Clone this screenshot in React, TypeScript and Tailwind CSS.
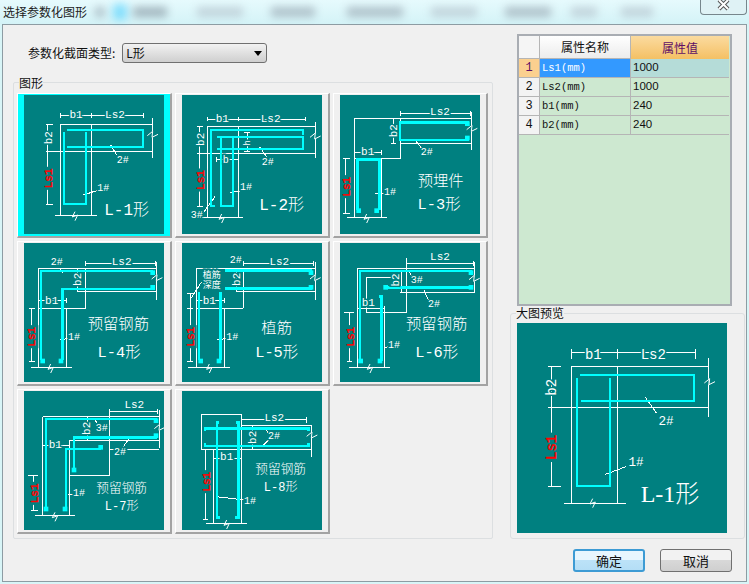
import type { ReactNode } from "react";

const cjk = "font-['Noto_Sans_CJK_SC','Liberation_Sans',sans-serif]";
const TEAL = "#008080";
const CYAN = "#00ffff";

// all drawing coordinates are in 3x reference pixels, one viewBox per drawing
function W({ d }: { d: string }) {
  return <path d={d} fill="none" stroke="#fff" strokeWidth={3} shapeRendering="crispEdges" />;
}

function C({ d, w = 8 }: { d: string; w?: number }) {
  return <path d={d} fill="none" stroke={CYAN} strokeWidth={w} shapeRendering="crispEdges" />;
}

function Blob({ x, y }: { x: number; y: number }) {
  return <rect x={x - 7} y={y - 7} width={14} height={14} fill={CYAN} />;
}

function T({ x, y, s = 33, fill = "#fff", rot, mono = true, serif, children }: {
  x: number;
  y: number;
  s?: number;
  fill?: string;
  rot?: boolean;
  mono?: boolean;
  serif?: boolean;
  children: ReactNode;
}) {
  const family = serif
    ? "'Liberation Serif','Noto Sans CJK SC',serif"
    : "'Liberation Mono','Noto Sans CJK SC',monospace";
  const red = fill === "#ff0000";
  return (
    <g transform={rot ? `rotate(-90 ${x} ${y})` : undefined}>
      {red && <rect x={x - s * 1.05} y={y - s * 0.55} width={s * 2.1} height={s * 1.1} fill={TEAL} />}
      <text
        x={x}
        y={y}
        fontSize={s}
        fill={fill}
        textAnchor="middle"
        dominantBaseline="central"
        stroke={red ? fill : TEAL}
        strokeWidth={red ? 1.5 : mono ? 9 : 0}
        paintOrder="stroke"
        fontWeight={mono ? 400 : 300}
        fontFamily={family}
      >
        {children}
      </text>
    </g>
  );
}

function BrkV({ x, y }: { x: number; y: number }) {
  return <path d={`M${x} ${y - 13}L${x - 8} ${y + 3}L${x + 8} ${y - 3}L${x} ${y + 14}`} fill="none" stroke="#fff" strokeWidth={3} />;
}

function Brk2({ x, y }: { x: number; y: number }) {
  return (
    <>
      <rect x={x - 3} y={y - 9} width={6} height={18} fill={TEAL} />
      <path d={`M${x - 15} ${y + 4}L${x + 1} ${y - 9}L${x - 1} ${y + 9}L${x + 17} ${y}`} fill="none" stroke="#fff" strokeWidth={3} />
    </>
  );
}

function L1() {
  return (
    <>
      <W d="M182 340V354M182 347H430M430 340V354M275 340V354" />
      <W d="M182 372H457M182 372V645M275 372V645M137 455H457M457 355V475M165 645H290" />
      <W d="M137 372H160M137 612H160M142 372V612" />
      <W d="M332 435L350 465M250 585L290 572" />
      <BrkV x={225} y={648} />
      <Brk2 x={457} y={403} />
      <C d="M200 390H428V440H200" w={6} />
      <C d="M192 395V611H258V395" w={6} />
      <T x={228} y={346}>b1</T>
      <T x={345} y={346}>Ls2</T>
      <T x={147} y={413} rot>b2</T>
      <T x={147} y={535} rot fill="#ff0000">Ls1</T>
      <T x={368} y={480} s={30}>2#</T>
      <T x={310} y={565} s={30}>1#</T>
      <T x={380} y={632} s={48} mono={false}>L-1形</T>
    </>
  );
}

function L2() {
  return (
    <>
      <W d="M622 350V364M622 357H915M915 350V364M715 350V364" />
      <W d="M622 380H945M622 380V652M715 380V652M592 460H945M945 365V475M605 652H730" />
      <W d="M590 380H608M590 618H608M597 380V618M590 460H608" />
      <W d="M648 471V485M648 478H715M742 397V455M733 397H751M733 455H751" />
      <W d="M778 440L800 470M690 578L725 572M645 590L605 645" />
      <BrkV x={665} y={655} />
      <Brk2 x={945} y={408} />
      <C d="M645 618H633V390H910V405" w={6} />
      <C d="M652 412H910V447H652" w={6} />
      <C d="M662 408V618H698V408" w={6} />
      <T x={667} y={356}>b1</T>
      <T x={812} y={356}>Ls2</T>
      <T x={603} y={418} rot>b2</T>
      <T x={603} y={540} rot fill="#ff0000">Ls1</T>
      <T x={745} y={428} rot s={27}>h</T>
      <T x={677} y={480} s={30}>b</T>
      <T x={803} y={488} s={30}>2#</T>
      <T x={738} y={562} s={30}>1#</T>
      <T x={590} y={645} s={30}>3#</T>
      <T x={845} y={618} s={48} mono={false}>L-2形</T>
    </>
  );
}

function L3() {
  return (
    <>
      <W d="M212 334V348M212 341H422M422 334V348" />
      <W d="M74 355H425M74 355V652M155 475V652M74 475H212M212 355V475M212 430H425M425 335V450M50 652H172" />
      <W d="M38 475H60M38 640H60M45 475V640" />
      <W d="M74 458H155M155 451V465M190 355V430M183 430H197" />
      <W d="M255 420L275 445M135 582L165 580" />
      <BrkV x={110} y={655} />
      <Brk2 x={425} y={385} />
      <C d="M210 395V367H418" />
      <C d="M210 395V420H418" />
      <C d="M82 630V478H148V630" />
      <Blob x={86} y={632} />
      <Blob x={140} y={632} />
      <Blob x={412} y={371} />
      <Blob x={412} y={414} />
      <T x={330} y={337}>Ls2</T>
      <T x={113} y={455}>b1</T>
      <T x={193} y={392} rot>b2</T>
      <T x={52} y={560} rot fill="#ff0000">Ls1</T>
      <T x={290} y={458} s={30}>2#</T>
      <T x={180} y={578} s={30}>1#</T>
      <T x={332} y={545} s={46} mono={false}>预埋件</T>
      <T x={327} y={615} s={46} mono={false}>L-3形</T>
    </>
  );
}

function L4() {
  return (
    <>
      <W d="M257 78V92M257 85H465M465 78V92" />
      <W d="M115 100H470M115 100V397M200 220V397M115 220H257M257 100V220M233 170H470M470 80V195M92 397H215" />
      <W d="M88 220H105M88 380H105M95 220V380M115 197H200M200 190V204M233 100V170" />
      <W d="M178 100L190 115M180 315L205 310" />
      <BrkV x={152} y={400} />
      <Brk2 x={470} y={128} />
      <C d="M123 375V108H460" />
      <C d="M187 375V162H465" />
      <Blob x={128} y={378} />
      <Blob x={183} y={378} />
      <Blob x={458} y={113} />
      <Blob x={458} y={157} />
      <T x={365} y={82}>Ls2</T>
      <T x={170} y={82} s={30}>2#</T>
      <T x={155} y={197}>b1</T>
      <T x={233} y={133} rot>b2</T>
      <T x={97} y={305} rot fill="#ff0000">Ls1</T>
      <T x={222} y={307} s={30}>1#</T>
      <T x={355} y={270} s={46} mono={false}>预留钢筋</T>
      <T x={357} y={355} s={46} mono={false}>L-4形</T>
    </>
  );
}

function L5() {
  return (
    <>
      <W d="M730 78V92M730 85H940M940 78V92" />
      <W d="M590 100H945M590 100V397M673 220V397M590 220H730M730 100V220M708 170H945M945 80V195M565 397H690" />
      <W d="M562 175H578M562 220H578M562 380H578M570 175V380M590 197H673M673 190V204M708 100V170" />
      <W d="M715 100L725 110M652 315L680 310M573 190L605 140" />
      <BrkV x={628} y={400} />
      <Brk2 x={945} y={128} />
      <C d="M675 106H935" />
      <C d="M675 161H935" />
      <C d="M597 375V172" />
      <C d="M662 375V172" />
      <Blob x={602} y={378} />
      <Blob x={657} y={378} />
      <Blob x={933} y={113} />
      <Blob x={933} y={157} />
      <T x={838} y={82}>Ls2</T>
      <T x={707} y={75} s={30}>2#</T>
      <T x={635} y={122} s={27}>植筋</T>
      <T x={635} y={152} s={27}>深度</T>
      <T x={628} y={197}>b1</T>
      <T x={710} y={133} rot>b2</T>
      <T x={572} y={305} rot fill="#ff0000">Ls1</T>
      <T x={697} y={307} s={30}>1#</T>
      <T x={830} y={283} s={46} mono={false}>植筋</T>
      <T x={830} y={355} s={46} mono={false}>L-5形</T>
    </>
  );
}

function L6() {
  return (
    <>
      <W d="M230 78V92M230 85H430M430 78V92" />
      <W d="M82 100H435M82 100V397M163 212V397M108 232H230M230 70V232M210 172H435M432 80V172M108 127V232M108 127H205M82 220H163M58 397H180" />
      <W d="M42 232H72M50 380H65M57 232V380M215 105V172" />
      <W d="M238 110L245 125M282 165L295 195M163 338L175 335" />
      <BrkV x={120} y={400} />
      <Brk2 x={432} y={130} />
      <C d="M90 378V108H425" />
      <C d="M165 157H425" />
      <C d="M148 184H154V378" w={7} />
      <Blob x={92} y={378} />
      <Blob x={150} y={378} />
      <Blob x={423} y={113} />
      <Blob x={423} y={157} />
      <Blob x={167} y={157} />
      <T x={330} y={65}>Ls2</T>
      <T x={197} y={135} rot>b2</T>
      <T x={260} y={137} s={30}>3#</T>
      <T x={312} y={207} s={30}>2#</T>
      <T x={115} y={204}>b1</T>
      <T x={62} y={305} rot fill="#ff0000">Ls1</T>
      <T x={192} y={330} s={30}>1#</T>
      <T x={320} y={270} s={46} mono={false}>预留钢筋</T>
      <T x={320} y={355} s={46} mono={false}>L-6形</T>
    </>
  );
}

function L7() {
  return (
    <>
      <W d="M328 95H473M473 88V102M328 88V287" />
      <W d="M128 110H478M128 110V407M208 180V407M208 180H478M478 90V205M328 208H478M208 287H328M105 407H225" />
      <W d="M85 287H115M92 392H115M100 287V392M262 110V180M128 195H208" />
      <W d="M285 120L292 130M390 172L370 200M205 345L222 343" />
      <BrkV x={165} y={410} />
      <Brk2 x={478} y={142} />
      <C d="M138 385V117H470" />
      <C d="M222 270V172H470" w={7} />
      <C d="M197 385V207H302" w={7} />
      <Blob x={138} y={387} />
      <Blob x={195} y={387} />
      <Blob x={468} y={122} />
      <Blob x={468} y={167} />
      <Blob x={222} y={270} />
      <Blob x={302} y={202} />
      <T x={403} y={75}>Ls2</T>
      <T x={262} y={145} rot>b2</T>
      <T x={305} y={145} s={30}>3#</T>
      <T x={360} y={217} s={30}>2#</T>
      <T x={166} y={195}>b1</T>
      <T x={105} y={340} rot fill="#ff0000">Ls1</T>
      <T x={237} y={340} s={30}>1#</T>
      <T x={365} y={325} s={38} mono={false}>预留钢筋</T>
      <T x={365} y={382} s={36} mono={false}>L-7形</T>
    </>
  );
}

function L8() {
  return (
    <>
      <W d="M604 103H723V208H604ZM723 137H935M723 208H935M935 137V230M640 208V430M723 208V430M618 430H740" />
      <W d="M723 118H920M920 112V130M610 418H625M617 208V418M757 137V208M640 234H723" />
      <W d="M795 145L810 165M810 175L788 197M648 350L735 360" />
      <BrkV x={680} y={433} />
      <Brk2 x={935} y={165} />
      <C d="M615 153V145H925V153" w={7} />
      <C d="M615 190V198H925V190" w={7} />
      <C d="M658 128H651V412H660" />
      <C d="M708 128H715V412H704" />
      <T x={823} y={115}>Ls2</T>
      <T x={680} y={230}>b1</T>
      <T x={760} y={172} rot>b2</T>
      <T x={620} y={305} rot fill="#ff0000">Ls1</T>
      <T x={822} y={168} s={30}>2#</T>
      <T x={750} y={363} s={30}>1#</T>
      <T x={842} y={268} s={38} mono={false}>预留钢筋</T>
      <T x={842} y={325} s={36} mono={false}>L-8形</T>
    </>
  );
}

function Preview() {
  return (
    <>
      <W d="M214 150V180M214 160H587M587 150V180M352 150V180" />
      <W d="M214 202H625M214 202V612M352 202V612M145 326H625M625 178V355M192 612H378" />
      <W d="M145 202H183M145 562H183M155 202V562" />
      <W d="M436 295L470 343M316 526L378 503" />
      <BrkV x={278} y={612} />
      <Brk2 x={628} y={248} />
      <C d="M240 228H582V306H244" w={6} />
      <C d="M232 237V561H330V237" w={6} />
      <T x={280} y={167} s={42}>b1</T>
      <T x={460} y={167} s={42}>Ls2</T>
      <T x={155} y={265} s={42} rot>b2</T>
      <T x={155} y={445} s={42} rot fill="#ff0000">Ls1</T>
      <T x={498} y={368} s={38}>2#</T>
      <T x={408} y={490} s={38}>1#</T>
      <T x={510} y={585} s={72} mono={false} serif>L-1形</T>
    </>
  );
}

const shapes = [
  { id: "L1", box: "72 285 420 417", draw: <L1 /> },
  { id: "L2", box: "546 285 420 417", draw: <L2 /> },
  { id: "L3", box: "30 285 420 417", draw: <L3 /> },
  { id: "L4", box: "72 24 420 417", draw: <L4 /> },
  { id: "L5", box: "546 24 420 417", draw: <L5 /> },
  { id: "L6", box: "30 24 420 417", draw: <L6 /> },
  { id: "L7", box: "72 33 420 417", draw: <L7 /> },
  { id: "L8", box: "546 33 420 417", draw: <L8 /> },
];

const rows = [
  { no: "1", name: "Ls1(mm)", value: "1000" },
  { no: "2", name: "Ls2(mm)", value: "1000" },
  { no: "3", name: "b1(mm)", value: "240" },
  { no: "4", name: "b2(mm)", value: "240" },
];

// the blurred window behind the glass title bar
const blurs = [
  "ml-[8px] w-[10px] bg-gray-500",
  "ml-[8px] w-[14px] h-[16px] bg-sky-400",
  "ml-[6px] w-[34px] bg-gray-600",
  "ml-[30px] w-[46px] bg-gray-400",
  "ml-[28px] w-[44px] bg-gray-500",
  "ml-[32px] w-[56px] bg-gray-500",
  "ml-[28px] w-[46px] bg-gray-400",
  "ml-[28px] w-[46px] bg-gray-500",
  "ml-[20px] w-[26px] bg-gray-400",
  "ml-[24px] w-[32px] bg-gray-400",
];

export default function App() {
  return (
    <div className={`relative flex h-[584px] w-[749px] flex-col overflow-hidden bg-[#d8f5f7] ${cjk}`}>
      {/* Title bar */}
      <div className="flex h-[24px] items-center bg-gradient-to-b from-[#e6fafd] to-[#d4f3f7] pl-[3px]">
        <span className="text-[12px] leading-none text-[#222]">选择参数化图形</span>
        {blurs.map((c) => (
          <span key={c} className={`h-[10px] opacity-40 blur-[4px] ${c}`} />
        ))}
      </div>
      <div className="absolute right-[2px] top-0 flex h-[15px] w-[47px] items-center justify-center rounded-b-[4px] border border-t-0 border-[#77868c] bg-[#dff2f5]">
        <svg viewBox="0 0 13 11" className="mb-[4px] h-[11px] w-[13px]">
          <path d="M2 0L11 9M11 0L2 9" fill="none" stroke="#555" strokeWidth={4} />
          <path d="M2 0L11 9M11 0L2 9" fill="none" stroke="#fff" strokeWidth={2} />
        </svg>
      </div>

      {/* Dialog body */}
      <div className="mx-[2px] mb-[2px] flex h-[558px] flex-col border border-[#8d9ca3] bg-[#f0f0f0]">
        <div className="flex">
          <div className="ml-[10px] w-[480px]">
            <div className="flex h-[40px] items-center pl-[15px] pt-[16px]">
              <span className="text-[12px] leading-none text-[#111]">参数化截面类型:</span>
              <div className="ml-[7px] flex h-[20px] w-[145px] items-center justify-between rounded-[3px] border border-[#707070] bg-gradient-to-b from-[#f2f2f2] to-[#cfcfcf] pl-[3px] pr-[4px] text-[12px] text-[#111]">
                <span>L形</span>
                <span className="h-0 w-0 border-x-[4px] border-t-[5px] border-x-transparent border-t-black" />
              </div>
            </div>
            <div className="relative mt-[17px] h-[457px] w-[480px] rounded-[2px] border border-[#dcdfe1] pl-[3px] pt-[10px]">
              <span className="absolute -top-[7px] left-[5px] bg-[#f0f0f0] text-[12px] leading-[14px] text-[#111]">图形</span>
              <div className="grid grid-cols-[155px_155px_155px] gap-[3px]">
                {shapes.map((s, i) => (
                  <div
                    key={s.id}
                    className={`flex h-[145px] items-start border-b-2 border-l border-r-2 border-t border-b-[#a3a3a3] border-l-white border-r-[#a3a3a3] border-t-white pl-[6px] pt-[1px] ${i === 0 ? "bg-[#00ffff]" : "bg-[#f0f0f0]"}`}
                  >
                    <svg viewBox={s.box} className="h-[139px] w-[140px] bg-[#008080]">
                      {s.draw}
                    </svg>
                  </div>
                ))}
              </div>
            </div>
          </div>

          <div className="ml-[17px] w-[235px]">
            {/* Property table */}
            <div className="ml-[7px] mt-[9px] h-[272px] w-[215px] border-2 border-[#a9adb3] bg-[#cde8d0]">
              <div className="grid grid-cols-[21px_91px_98px] text-[12px] leading-none">
                <div className="h-[23px] border-b border-r border-[#b5b5b5] bg-[#f5f5f5]" />
                <div className="flex h-[23px] items-center justify-center border-b border-r border-[#b5b5b5] bg-gradient-to-b from-white to-[#ececec] text-[#111]">属性名称</div>
                <div className="flex h-[23px] items-center justify-center bg-gradient-to-b from-[#fbdb9f] to-[#f4c063] text-[#5f0f66]">属性值</div>
                {rows.map((r, i) => (
                  <div key={r.no} className="contents">
                    <div className={`flex h-[19px] items-center justify-center border-b border-r border-[#b5b5b5] font-['Liberation_Mono',monospace] ${i === 0 ? "bg-[#fbd08f] text-[#5f0f66]" : "bg-[#f3f3f3] text-[#111]"}`}>{r.no}</div>
                    <div className={`flex h-[19px] items-center border-b border-r border-[#b5b5b5] pl-[2px] font-['Liberation_Mono',monospace] text-[10.5px] ${i === 0 ? "bg-[#3399ff] text-white" : "text-[#111]"}`}>{r.name}</div>
                    <div className={`flex h-[19px] items-center border-b border-[#b5b5b5] pl-[2px] font-['Liberation_Sans',sans-serif] text-[11.5px] text-[#111] ${i === 0 ? "bg-[#b5dcd8]" : ""}`}>{r.value}</div>
                  </div>
                ))}
              </div>
            </div>

            {/* Large preview */}
            <div className="relative mt-[7px] h-[226px] w-[235px] rounded-[3px] border border-[#dcdfe1] pl-[6px] pt-[9px]">
              <span className="absolute -top-[8px] left-[5px] bg-[#f0f0f0] text-[12px] leading-[14px] text-[#111]">大图预览</span>
              <svg viewBox="51 72 630 630" className="h-[210px] w-[210px] bg-[#008080]">
                <Preview />
              </svg>
            </div>
          </div>
        </div>

        <div className="mr-[14px] mt-[10px] flex justify-end gap-[15px] text-[13px] text-[#111]">
          <button className="h-[23px] w-[72px] rounded-[3px] border-2 border-[#3d9bd4] bg-[linear-gradient(#e8f6fe_50%,#bce2f8_50%,#b4def6)] leading-none">确定</button>
          <button className="h-[23px] w-[72px] rounded-[3px] border border-[#707070] bg-[linear-gradient(#f2f2f2_50%,#d8d8d8_50%,#cfcfcf)] leading-none">取消</button>
        </div>
      </div>
    </div>
  );
}
